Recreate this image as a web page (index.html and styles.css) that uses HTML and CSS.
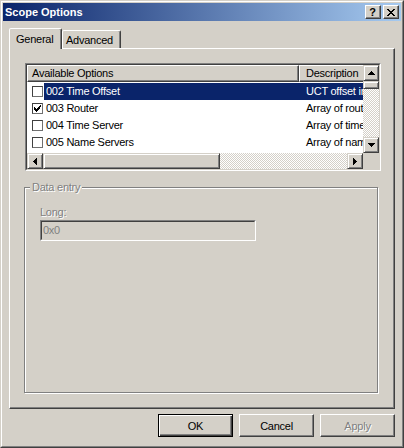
FILE: index.html
```html
<!DOCTYPE html>
<html>
<head>
<meta charset="utf-8">
<title>Scope Options</title>
<link rel="stylesheet" href="styles.css">
</head>
<body>
<div class="window">
  <div class="frame">
    <div class="titlebar">
      <span class="title">Scope Options</span>
      <div class="capbtns">
        <div class="capbtn help">?</div>
        <div class="capbtn">
          <svg width="8" height="7" viewBox="0 0 8 7" shape-rendering="crispEdges"><path d="M0 0h2v1H0zM6 0h2v1H6zM1 1h2v1H1zM5 1h2v1H5zM2 2h4v1H2zM3 3h2v1H3zM2 4h4v1H2zM1 5h2v1H1zM5 5h2v1H5zM0 6h2v1H0zM6 6h2v1H6z" fill="#000"/></svg>
        </div>
      </div>
    </div>
    <div class="body">
      <div class="tabs">
        <div class="tab active">General</div>
        <div class="tab adv">Advanced</div>
      </div>
      <div class="panel">
        <div class="listview">
          <div class="lv-inner">
            <div class="lv-content">
              <div class="lv-header">
                <div class="hcol c1">Available Options</div>
                <div class="hcol c2">Description</div>
              </div>
              <div class="lv-rows">
                <div class="row sel">
                  <div class="chkcell"><span class="chk"></span></div>
                  <div class="rowbody"><span class="name">002 Time Offset</span><span class="desc">UCT offset in seconds from UTC</span></div>
                </div>
                <div class="row">
                  <div class="chkcell"><span class="chk"><svg width="7" height="7" viewBox="0 0 7 7" shape-rendering="crispEdges"><path d="M6 0h1v1H6zM5 1h2v1H5zM0 2h1v1H0zM4 2h2v1H4zM0 3h2v1H0zM3 3h3v1H3zM0 4h5v1H0zM1 5h3v1H1zM2 6h1v1H2z" fill="#000"/></svg></span></div>
                  <div class="rowbody"><span class="name">003 Router</span><span class="desc">Array of router addresses ordered by preference</span></div>
                </div>
                <div class="row">
                  <div class="chkcell"><span class="chk"></span></div>
                  <div class="rowbody"><span class="name">004 Time Server</span><span class="desc">Array of time server addresses, by preference</span></div>
                </div>
                <div class="row">
                  <div class="chkcell"><span class="chk"></span></div>
                  <div class="rowbody"><span class="name">005 Name Servers</span><span class="desc">Array of name servers [IEN 116], by preference</span></div>
                </div>
                <div class="row">
                  <div class="chkcell"><span class="chk"></span></div>
                  <div class="rowbody"><span class="name">006 DNS Servers</span><span class="desc">Array of DNS servers, by preference</span></div>
                </div>
              </div>
            </div>
            <div class="vscroll">
              <div class="sbtn"><svg width="7" height="4" viewBox="0 0 7 4" shape-rendering="crispEdges"><path d="M3 0h1v1H3zM2 1h3v1H2zM1 2h5v1H1zM0 3h7v1H0z" fill="#000"/></svg></div>
              <div class="vthumb"></div>
              <div class="track"></div>
              <div class="sbtn"><svg width="7" height="4" viewBox="0 0 7 4" shape-rendering="crispEdges"><path d="M0 0h7v1H0zM1 1h5v1H1zM2 2h3v1H2zM3 3h1v1H3z" fill="#000"/></svg></div>
            </div>
            <div class="hscroll">
              <div class="sbtn"><svg width="4" height="7" viewBox="0 0 4 7" shape-rendering="crispEdges"><path d="M0 3h1v1H0zM1 2h1v3H1zM2 1h1v5H2zM3 0h1v7H3z" fill="#000"/></svg></div>
              <div class="hthumb"></div>
              <div class="track"></div>
              <div class="sbtn"><svg width="4" height="7" viewBox="0 0 4 7" shape-rendering="crispEdges"><path d="M0 0h1v7H0zM1 1h1v5H1zM2 2h1v3H2zM3 3h1v1H3z" fill="#000"/></svg></div>
            </div>
            <div class="corner"></div>
          </div>
        </div>
        <fieldset class="group">
          <legend class="disabled">Data entry</legend>
          <div class="gcontent">
            <div class="disabled lbl">Long:</div>
            <div class="field"><div class="field-in">0x0</div></div>
          </div>
        </fieldset>
      </div>
      <div class="buttons">
        <div class="btn default">OK</div>
        <div class="btn">Cancel</div>
        <div class="btn disabled">Apply</div>
      </div>
    </div>
  </div>
</div>
</body>
</html>
```
FILE: styles.css
```css
html, body {
  margin: 0;
  padding: 0;
}
body {
  width: 404px;
  height: 448px;
  overflow: hidden;
  font-family: "Liberation Sans", Arial, sans-serif;
  font-size: 11px;
  letter-spacing: -0.25px;
  color: #000;
  background: #d4d0c8;
}
.window {
  width: 404px;
  height: 448px;
  box-sizing: border-box;
  border: 1px solid;
  border-color: #d4d0c8 #404040 #404040 #d4d0c8;
  background: #d4d0c8;
}
.frame {
  height: 100%;
  box-sizing: border-box;
  border: 1px solid;
  border-color: #fff #808080 #808080 #fff;
  padding: 1px;
  display: flex;
  flex-direction: column;
}
.titlebar {
  flex: none;
  height: 18px;
  background: linear-gradient(to right, #0a246a, #a6caf0);
  display: flex;
  align-items: center;
  padding: 0 2px;
}
.title {
  flex: 1;
  color: #fff;
  font-weight: bold;
  letter-spacing: 0;
  line-height: 13px;
}
.capbtns {
  display: flex;
  gap: 2px;
}
.capbtn {
  width: 16px;
  height: 14px;
  box-sizing: border-box;
  border: 1px solid;
  border-color: #fff #404040 #404040 #fff;
  box-shadow: inset -1px -1px #808080;
  background: #d4d0c8;
  display: flex;
  align-items: center;
  justify-content: center;
}
.capbtn.help {
  font-weight: bold;
  font-size: 11px;
  line-height: 12px;
  letter-spacing: 0;
  padding-right: 1px;
}
.body {
  flex: 1;
  display: flex;
  flex-direction: column;
  padding: 7px 6px 0;
}
.tabs {
  display: flex;
  align-items: flex-start;
  height: 21px;
  margin-bottom: -1px;
  position: relative;
  z-index: 1;
}
.tab {
  box-sizing: border-box;
  height: 18px;
  margin-top: 2px;
  border: 1px solid;
  border-bottom: none;
  border-color: #fff #404040 transparent #fff;
  border-radius: 2px 2px 0 0;
  box-shadow: inset -1px 0 #808080;
  background: #d4d0c8;
  line-height: 13px;
  padding-top: 3px;
  white-space: nowrap;
}
.tab.active {
  width: 53px;
  height: 21px;
  margin-top: 0;
  padding-left: 6px;
  padding-top: 4px;
}
.tab.adv {
  width: 59px;
  padding-left: 3px;
}
.panel {
  flex: none;
  height: 361px;
  box-sizing: border-box;
  border: 1px solid;
  border-color: #fff #404040 #404040 #fff;
  box-shadow: inset -1px -1px #808080;
  padding: 14px 0 0 15px;
}
.listview {
  width: 356px;
  height: 108px;
  box-sizing: border-box;
  border: 1px solid;
  border-color: #808080 #fff #fff #808080;
}
.lv-inner {
  height: 100%;
  box-sizing: border-box;
  border: 1px solid;
  border-color: #404040 #d4d0c8 #d4d0c8 #404040;
  display: grid;
  grid-template-columns: 336px 16px;
  grid-template-rows: 88px 16px;
  background: #fff;
}
.lv-content {
  overflow: hidden;
  background: #fff;
}
.lv-header {
  display: flex;
  height: 17px;
}
.hcol {
  flex: none;
  box-sizing: border-box;
  height: 17px;
  border: 1px solid;
  border-color: #fff #404040 #404040 #fff;
  box-shadow: inset -1px -1px #808080;
  background: #d4d0c8;
  line-height: 13px;
  padding-top: 1px;
  white-space: nowrap;
  overflow: hidden;
}
.hcol.c1 {
  width: 272px;
  padding-left: 4px;
}
.hcol.c2 {
  width: 200px;
  padding-left: 6px;
}
.lv-rows {
  padding-top: 1px;
}
.row {
  display: flex;
  height: 17px;
  line-height: 17px;
  white-space: nowrap;
}
.chkcell {
  flex: none;
  width: 17px;
  box-sizing: border-box;
  padding-left: 5px;
  display: flex;
  align-items: center;
}
.chk {
  width: 11px;
  height: 11px;
  box-sizing: border-box;
  border: 1px solid;
  border-color: #404040 #707070 #707070 #404040;
  background: #fff;
  display: flex;
  align-items: center;
  justify-content: center;
}
.rowbody {
  flex: 1;
  display: flex;
  min-width: 0;
}
.row.sel .rowbody {
  background: #0a246a;
  color: #fff;
}
.name {
  flex: none;
  width: 255px;
  box-sizing: border-box;
  padding-left: 2px;
  overflow: hidden;
}
.desc {
  flex: none;
  padding-left: 7px;
}
.vscroll {
  display: flex;
  flex-direction: column;
}
.hscroll {
  display: flex;
}
.sbtn, .vthumb, .hthumb {
  flex: none;
  box-sizing: border-box;
  border: 1px solid;
  border-color: #d4d0c8 #404040 #404040 #d4d0c8;
  box-shadow: inset 1px 1px #fff, inset -1px -1px #808080;
  background: #d4d0c8;
}
.sbtn {
  width: 16px;
  height: 16px;
  display: flex;
  align-items: center;
  justify-content: center;
}
.vthumb {
  height: 8px;
}
.hthumb {
  width: 177px;
}
.track {
  flex: 1;
  background: repeating-conic-gradient(#d4d0c8 0 25%, #fff 0 50%) 0 0 / 2px 2px;
}
.corner {
  background: #d4d0c8;
}
.group {
  margin: 10px 0 0 -1px;
  padding: 0;
  width: 354px;
  height: 212px;
  box-sizing: border-box;
  border: 1px solid #808080;
  box-shadow: inset 1px 1px #fff, 1px 1px #fff;
  min-width: 0;
}
.group legend {
  margin-left: 5px;
  padding: 0 2px;
  line-height: 13px;
  background: #d4d0c8;
}
.disabled {
  color: #808080;
  text-shadow: 1px 1px #fff;
}
.gcontent {
  padding: 12px 0 0 15px;
}
.lbl {
  line-height: 13px;
}
.field {
  margin-top: 1px;
  width: 216px;
  height: 21px;
  box-sizing: border-box;
  border: 1px solid;
  border-color: #808080 #fff #fff #808080;
}
.field-in {
  height: 100%;
  box-sizing: border-box;
  border: 1px solid;
  border-color: #404040 #d4d0c8 #d4d0c8 #404040;
  color: #808080;
  padding-left: 1px;
  line-height: 17px;
}
.buttons {
  display: flex;
  justify-content: flex-end;
  gap: 6px;
  margin-top: 5px;
}
.btn {
  width: 75px;
  height: 23px;
  box-sizing: border-box;
  border: 1px solid;
  border-color: #fff #404040 #404040 #fff;
  box-shadow: inset -1px -1px #808080;
  background: #d4d0c8;
  display: flex;
  align-items: center;
  justify-content: center;
}
.btn.default {
  border-color: #000;
  box-shadow: inset 1px 1px #fff, inset -1px -1px #404040, inset -2px -2px #808080;
}
```
